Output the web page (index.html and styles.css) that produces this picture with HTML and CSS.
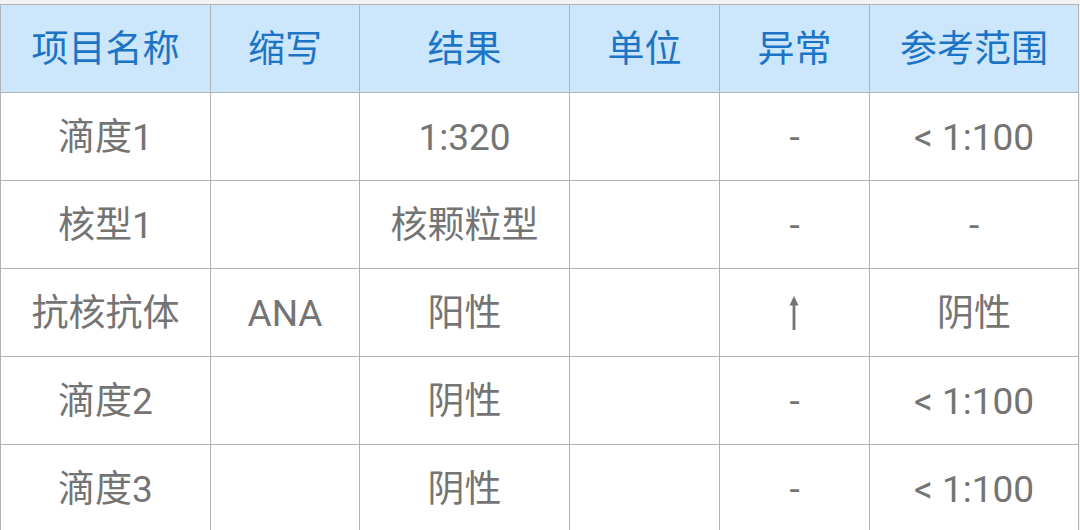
FILE: index.html
```html
<!DOCTYPE html>
<html lang="zh">
<head>
<meta charset="utf-8">
<link rel="stylesheet" href="styles.css">
</head>
<body>
<div class="wrap">
<table class="report">
  <colgroup>
    <col class="c1"><col class="c2"><col class="c3"><col class="c4"><col class="c5"><col class="c6">
  </colgroup>
  <thead>
    <tr><th>项目名称</th><th>缩写</th><th>结果</th><th>单位</th><th>异常</th><th>参考范围</th></tr>
  </thead>
  <tbody>
    <tr><td>滴度1</td><td></td><td>1:320</td><td></td><td>-</td><td>&lt; 1:100</td></tr>
    <tr><td>核型1</td><td></td><td>核颗粒型</td><td></td><td>-</td><td>-</td></tr>
    <tr><td>抗核抗体</td><td>ANA</td><td>阳性</td><td></td><td class="arrow"><svg class="up" width="12" height="34" viewBox="0 0 12 34" role="img" aria-label="↑"><polygon points="6,0 10.5,9.5 1.5,9.5" fill="#747474"/><rect x="4.6" y="8" width="2.8" height="26" fill="#747474"/></svg></td><td>阴性</td></tr>
    <tr><td>滴度2</td><td></td><td>阴性</td><td></td><td>-</td><td>&lt; 1:100</td></tr>
    <tr><td>滴度3</td><td></td><td>阴性</td><td></td><td>-</td><td>&lt; 1:100</td></tr>
  </tbody>
</table>
</div>
</body>
</html>
```

FILE: styles.css
```css
html, body {
  margin: 0;
  padding: 0;
  background: #f3f3f3;
  overflow: hidden;
}
.wrap {
  padding-top: 4px;
}
.report {
  border-collapse: collapse;
  table-layout: fixed;
  width: 1078px;
  background: #ffffff;
  font-family: Roboto, "Noto Sans CJK SC", sans-serif;
  font-size: 37px;
}
.c1 { width: 210px; }
.c2 { width: 149px; }
.c3 { width: 210px; }
.c4 { width: 150px; }
.c5 { width: 150px; }
.c6 { width: 209px; }
.report th, .report td {
  border: 1px solid #b3b3b3;
  text-align: center;
  vertical-align: middle;
  padding: 3px 0 0 0;
  height: 88px;
  box-sizing: border-box;
  line-height: 1.2;
}
.report th {
  background: #cce6fb;
  color: #1c74c6;
  font-weight: normal;
}
.report td {
  color: #747474;
}
.report td.arrow {
  padding: 0;
  line-height: 1;
}
.up {
  display: block;
  margin: 0 auto;
  position: relative;
  left: -1px;
}
```
